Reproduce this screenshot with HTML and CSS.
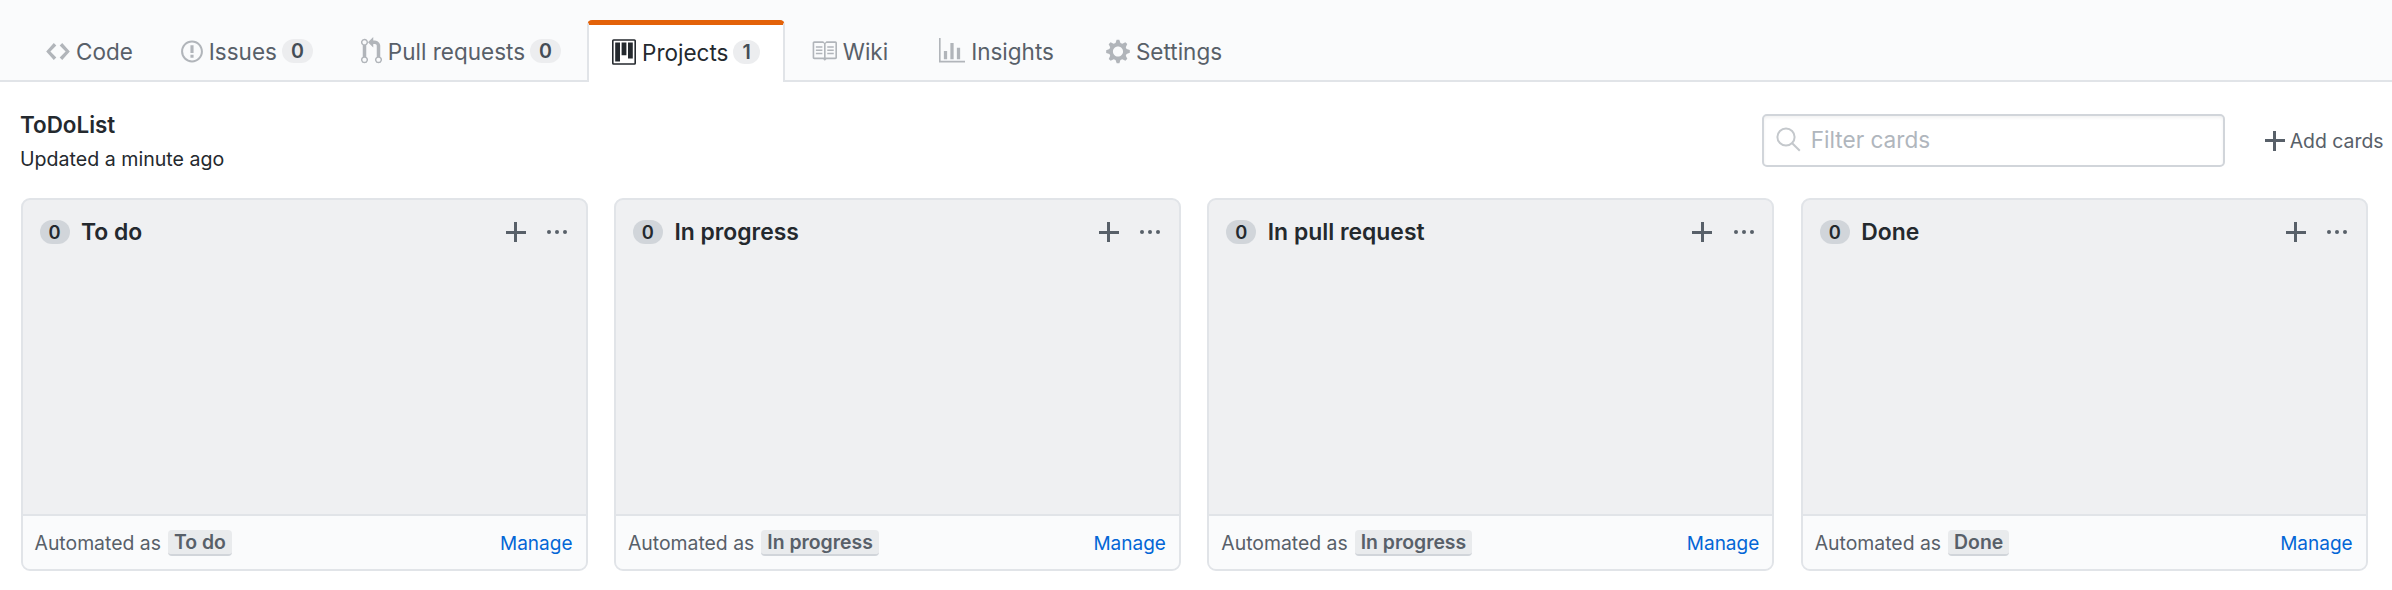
FILE: index.html

```html
<!DOCTYPE html>
<html lang="en">
<head>
  <meta charset="UTF-8" />
  <title>ToDoList</title>
  <link rel="stylesheet" href="styles.css">
</head>
<body>
  <nav class="tabs">
    <a class="tab tab-tight">
      <svg class="icon" width="24" height="27" viewBox="0 0 14 16"><path d="M9.5 3L8 4.5 11.5 8 8 11.5 9.5 13 14 8 9.5 3zm-5 0L0 8l4.5 5L6 11.5 2.5 8 6 4.5 4.5 3z"/></svg>
      <span>Code</span>
    </a>
    <a class="tab tab-tight">
      <svg class="icon" width="22" height="25" viewBox="0 0 14 16"><path d="M7 2.3c3.14 0 5.7 2.56 5.7 5.7s-2.56 5.7-5.7 5.7A5.71 5.71 0 0 1 1.3 8c0-3.14 2.56-5.7 5.7-5.7zM7 1C3.14 1 0 4.14 0 8s3.14 7 7 7 7-3.14 7-7-3.14-7-7-7zm1 3H6v5h2V4zm0 6H6v2h2v-2z"/></svg>
      <span>Issues</span>
      <span class="counter">0</span>
    </a>
    <a class="tab">
      <svg class="icon" width="21" height="28" viewBox="0 0 12 16"><path d="M11 11.28V5c-.03-.78-.34-1.47-.94-2.06C9.46 2.35 8.78 2.03 8 2H7V0L4 3l3 3V4h1c.27.02.48.11.69.31.21.2.3.42.31.69v6.28A1.993 1.993 0 0 0 10 15a1.993 1.993 0 0 0 1-3.72zm-1 2.92c-.66 0-1.2-.55-1.2-1.2 0-.65.55-1.2 1.2-1.2.65 0 1.2.55 1.2 1.2 0 .65-.55 1.2-1.2 1.2zM4 3c0-1.11-.89-2-2-2a1.993 1.993 0 0 0-1 3.72v6.56A1.993 1.993 0 0 0 2 15a1.993 1.993 0 0 0 1-3.72V4.72c.59-.34 1-.98 1-1.72zm-.8 10c0 .66-.55 1.2-1.2 1.2-.65 0-1.2-.55-1.2-1.2 0-.65.55-1.2 1.2-1.2.65 0 1.2.55 1.2 1.2zM2 4.2C1.34 4.2.8 3.65.8 3c0-.65.55-1.2 1.2-1.2.65 0 1.2.55 1.2 1.2 0 .65-.55 1.2-1.2 1.2z"/></svg>
      <span>Pull requests</span>
      <span class="counter">0</span>
    </a>
    <a class="tab tab-active">
      <svg class="icon" width="24" height="26" viewBox="0 0 15 16"><path fill-rule="evenodd" d="M10 12h3V2h-3v10zm-4-2h3V2H6v8zm-4 4h3V2H2v12zm-1 1h13V1H1v14zM14 0H1a1 1 0 0 0-1 1v14a1 1 0 0 0 1 1h13a1 1 0 0 0 1-1V1a1 1 0 0 0-1-1z"/></svg>
      <span>Projects</span>
      <span class="counter">1</span>
    </a>
    <a class="tab">
      <svg class="icon" width="26" height="26" viewBox="0 0 16 16"><path fill-rule="evenodd" d="M3 5h4v1H3V5zm0 3h4V7H3v1zm0 2h4V9H3v1zm11-5h-4v1h4V5zm0 2h-4v1h4V7zm0 2h-4v1h4V9zm2-6v9c0 .55-.45 1-1 1H9.5l-1 1-1-1H2c-.55 0-1-.45-1-1V3c0-.55.45-1 1-1h5.5l1 1 1-1H15c.55 0 1 .45 1 1zm-8 .5L7.5 3H2v9h6V3.5zm7-.5H9.5l-.5.5V12h6V3z"/></svg>
      <span>Wiki</span>
    </a>
    <a class="tab">
      <svg class="icon" width="26" height="26" viewBox="0 0 16 16"><path d="M16 14v1H0V0h1v14h15zM5 13H3V8h2v5zm4 0H7V3h2v10zm4 0h-2V6h2v7z"/></svg>
      <span>Insights</span>
    </a>
    <a class="tab tab-last">
      <svg class="icon" width="24" height="27" viewBox="0 0 14 16"><path fill-rule="evenodd" d="M14 8.77v-1.6l-1.94-.64-.45-1.09.88-1.84-1.13-1.13-1.81.91-1.09-.45-.69-1.92h-1.6l-.63 1.94-1.11.45-1.84-.88-1.13 1.13.91 1.81-.45 1.09L0 7.23v1.59l1.94.64.45 1.09-.88 1.84 1.13 1.13 1.81-.91 1.09.45.69 1.92h1.59l.63-1.94 1.11-.45 1.84.88 1.13-1.13-.92-1.81.47-1.09L14 8.75v.02zM7 11c-1.66 0-3-1.34-3-3s1.34-3 3-3 3 1.34 3 3-1.34 3-3 3z"/></svg>
      <span>Settings</span>
    </a>
  </nav>

  <header class="board-head">
    <div class="board-info">
      <h1>ToDoList</h1>
      <p>Updated a minute ago</p>
    </div>
    <div class="board-tools">
      <label class="filter">
        <svg class="filter-icon" width="25" height="25" viewBox="0 0 25 25"><circle cx="10" cy="10" r="8.6"/><path d="M16.2 16.2l7.6 7.6"/></svg>
        <input type="text" placeholder="Filter cards" />
      </label>
      <a class="add-cards"><span class="plus"></span>Add cards</a>
    </div>
  </header>

  <main class="columns">
    <section class="column">
      <div class="column-head">
        <span class="column-count">0</span>
        <h2>To do</h2>
        <span class="plus"></span>
        <span class="dots"><i></i><i></i><i></i></span>
      </div>
      <div class="column-body"></div>
      <div class="column-foot">
        <span>Automated as</span><span class="tag">To do</span><a class="manage">Manage</a>
      </div>
    </section>
    <section class="column">
      <div class="column-head">
        <span class="column-count">0</span>
        <h2>In progress</h2>
        <span class="plus"></span>
        <span class="dots"><i></i><i></i><i></i></span>
      </div>
      <div class="column-body"></div>
      <div class="column-foot">
        <span>Automated as</span><span class="tag">In progress</span><a class="manage">Manage</a>
      </div>
    </section>
    <section class="column">
      <div class="column-head">
        <span class="column-count">0</span>
        <h2>In pull request</h2>
        <span class="plus"></span>
        <span class="dots"><i></i><i></i><i></i></span>
      </div>
      <div class="column-body"></div>
      <div class="column-foot">
        <span>Automated as</span><span class="tag">In progress</span><a class="manage">Manage</a>
      </div>
    </section>
    <section class="column">
      <div class="column-head">
        <span class="column-count">0</span>
        <h2>Done</h2>
        <span class="plus"></span>
        <span class="dots"><i></i><i></i><i></i></span>
      </div>
      <div class="column-body"></div>
      <div class="column-foot">
        <span>Automated as</span><span class="tag">Done</span><a class="manage">Manage</a>
      </div>
    </section>
  </main>
</body>
</html>
```

FILE: styles.css

```css
* { box-sizing: border-box; }
html, body { height: 590px; overflow: hidden; }
body { margin: 0; background: #fff; font-family: Inter, "Liberation Sans", sans-serif; font-size: 21.4px; color: #24292e; }

.tabs { display: flex; align-items: flex-end; height: 82px; padding-left: 20.5px; background: #fafbfc; border-bottom: 2px solid #e1e4e8; }
.tab { display: flex; align-items: center; height: 61px; margin-bottom: -2px; padding: 0 23.5px 3px; font-size: 22.5px; color: #586069; white-space: nowrap; border: 2px solid transparent; border-bottom: 0; }
.tab-tight { padding-right: 20.5px; }
.tab-last { padding-left: 24.5px; }
.tab .icon { flex: none; margin-right: 6px; fill: #b1b5ba; }
.tab-active { height: 62px; background: #fff; color: #24292e; border-color: #e1e4e8; border-top: 5px solid #e36209; border-radius: 5px 5px 0 0; }
.tab-active .icon { fill: #24292e; }
.counter { display: inline-block; min-width: 25px; margin-left: 5px; padding: 0 9px; background: #ecedef; border-radius: 15px; font-size: 19.6px; font-weight: 600; line-height: 24px; text-align: center; color: #444d56; }

.board-head { display: flex; justify-content: space-between; padding: 0 8.5px 0 20px; height: 116px; }
.board-info h1 { margin: 30px 0 0; font-size: 22.4px; font-weight: 600; line-height: 26px; }
.board-info p { margin: 9px 0 0; font-size: 19.6px; line-height: 24px; }
.board-tools { display: flex; align-items: flex-start; padding-top: 32px; }
.filter { display: flex; align-items: center; width: 463px; height: 53px; padding: 0 0 2px 12px; background: #fff; border: 2px solid #d1d5da; border-radius: 5px; box-shadow: inset 0 2px 3px rgba(27,31,35,.06); }
.filter-icon { flex: none; margin-right: 10px; fill: none; stroke: #c4c8cc; stroke-width: 2; }
.filter input { flex: 1; min-width: 0; border: 0; outline: 0; padding: 0; background: transparent; font: inherit; font-size: 22.6px; }
.filter input::placeholder { color: #b0b6bd; opacity: 1; }
.add-cards { display: flex; align-items: center; height: 53px; margin-left: 40px; font-size: 19.4px; color: #586069; }
.add-cards .plus { margin-right: 5px; }

.plus { position: relative; display: block; flex: none; width: 20px; height: 20px; }
.plus::before, .plus::after { content: ""; position: absolute; background: #586069; }
.plus::before { left: 0; right: 0; top: 8.5px; height: 3px; }
.plus::after { top: 0; bottom: 0; left: 8.5px; width: 3px; }

.columns { display: grid; grid-template-columns: repeat(4, 567px); gap: 26.4px; padding-left: 20.5px; }
.column { display: flex; flex-direction: column; height: 373px; background: #eff0f2; border: 2px solid #e1e4e8; border-radius: 9px; overflow: hidden; }
.column-head { display: flex; align-items: center; height: 64px; padding: 0 18.5px 0 17px; }
.column-count { width: 30px; height: 24px; margin-right: 11.5px; background: #d1d5da; border-radius: 15px; font-size: 18.3px; font-weight: 600; line-height: 24px; text-align: center; }
.column-head h2 { flex: 1; margin: 0; font-size: 22.9px; font-weight: 600; }
.dots { display: flex; gap: 4px; margin-left: 21.5px; }
.dots i { display: block; width: 4px; height: 4px; border-radius: 50%; background: #586069; }
.column-body { flex: 1; }
.column-foot { display: flex; align-items: center; height: 55px; padding: 1px 13px 0 12px; background: #fafbfc; border-top: 2px solid #e1e4e8; font-size: 19.4px; color: #586069; }
.tag { margin-left: 7px; padding: 0 6px; height: 26px; background: #e9ebed; border-bottom: 2px solid #d1d5da; border-radius: 4px; font-weight: 600; line-height: 25px; }
.manage { margin-left: auto; font-size: 19px; color: #0366d6; }
```
